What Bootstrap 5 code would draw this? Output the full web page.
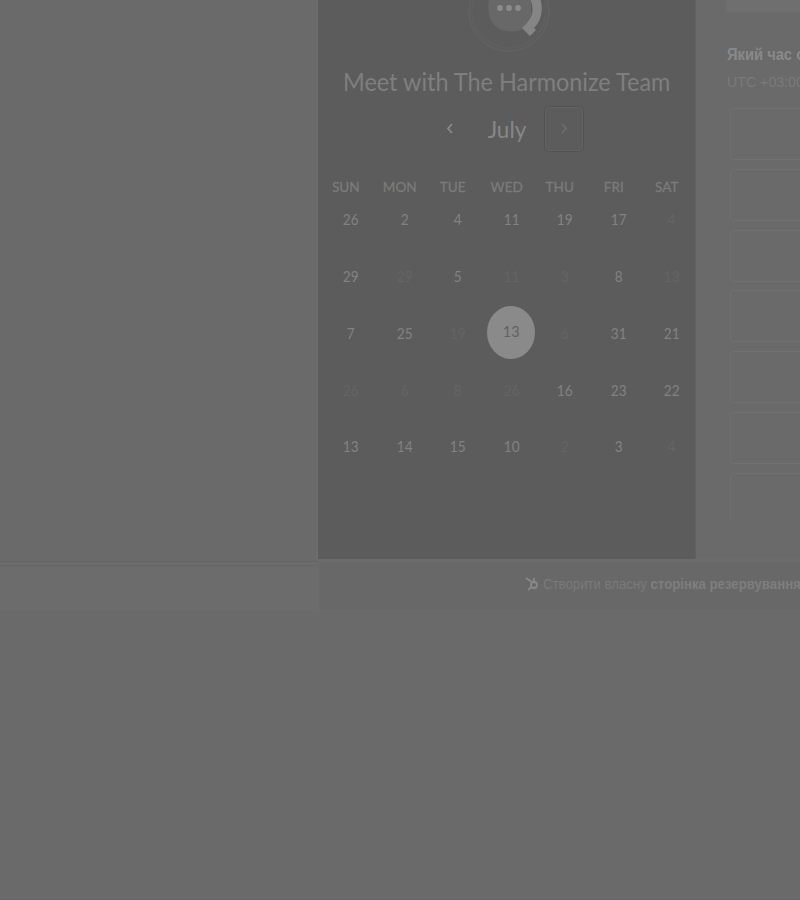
<!DOCTYPE html>
<html lang="uk">
<head>
<meta charset="utf-8">
<meta name="viewport" content="width=device-width, initial-scale=1">
<title>Meet with The Harmonize Team</title>
<link href="https://cdn.jsdelivr.net/npm/bootstrap@5.3.0/dist/css/bootstrap.min.css" rel="stylesheet">
<style>
body{background:#6a6a6a;color:#868686;font-family:"Liberation Sans",Arial,sans-serif;width:800px;height:900px;border-bottom:1px solid #686468}
.stage{height:559px}
.side{width:318px;border-right:2px solid #6d6d6d}
.cal{width:378px;background:#5c5c5c;border-right:1px solid #616161;font-family:Lato,sans-serif}
.logo{height:58px;padding-left:142px}
.logo svg{display:block}
.team{font-size:24.5px;line-height:30px;margin-top:9px;padding-left:25px;color:#7f7f7f;white-space:nowrap}
.team span{display:inline-block;transform:scaleX(.957);transform-origin:0 50%}
.monthbar{height:46px;margin-top:9px;padding-left:112px}
.month{width:74px;font-size:22.5px;line-height:48px;color:#878787}
.step{width:40px;height:46px;border:1px solid transparent;border-radius:4px}
.step.boxed{border-color:#535353;box-shadow:inset 0 0 0 1px #626262;color:#6c6c6c}
.week,.days{display:grid;grid-template-columns:repeat(7,53.5px);text-align:center}
.week{margin:25px 0 0 1px;font-size:14px;line-height:20px;color:#7b7b7b;-webkit-text-stroke:.3px #7b7b7b}
.week span{transform:scaleX(.97)}
.days{margin:-5px 0 0 6px;grid-auto-rows:56.7px;font-size:14.5px;color:#828282}
.days>span{transform:scaleX(.94)}
.days>.picked{transform:none;margin-top:-3px}
.faint{color:#646464}
.picked{width:48px;height:53px;border-radius:50%;background:#8a8a8a;color:#626262}
.times{width:104px;white-space:nowrap}
.dur{height:12px;margin-left:30px;background:#6f6f6f}
.ask{font-size:16px;line-height:20px;margin:33px 0 0 31px;color:#898989;transform:scaleX(.92);transform-origin:0 50%}
.zone{font-size:14.2px;line-height:18px;margin:8px 0 0 31px;color:#7a7a7a}
.slots{margin:17px 0 0 34px;height:412px;gap:8.8px}
.slot{height:52px;width:110px;border:1px solid #707070;border-radius:3px}
.foot{height:52px}
.foot-side{width:318px;background:linear-gradient(#6b6b6b 0 1px,#666 2px 3px,#6e6e6e 4px 5px,#666 6px,#6c6c6c 8px 100%)}
.foot-main{border-left:1px solid #6c6c6c;background:#686868;border-top:3px solid #6c6c6c;border-bottom:1px solid #6d6d6d;padding:0 0 4px 206px;white-space:nowrap;font-size:14px}
.own{color:#7a7a7a;transform:scaleX(.943);transform-origin:0 50%}
.own strong{color:#7e7e7e}
</style>
<script src="https://cdn.jsdelivr.net/npm/bootstrap@5.3.0/dist/js/bootstrap.bundle.min.js"></script>
</head>
<body class="overflow-hidden">
<main class="stage d-flex">
  <div class="side flex-shrink-0"></div>
  <section class="cal flex-shrink-0">
    <div class="logo">
      <svg width="96" height="58" viewBox="0 0 96 58" fill="none">
        <circle cx="49" cy="11" r="40" stroke="#656565"/>
        <circle cx="49" cy="11" r="37" stroke="#5f5f5f" stroke-width="2"/>
        <path d="M29-1C26 17 33 29 46 31c9 2 20-1 25-10V0Z" fill="#686868"/>
        <path d="M68-6C76 10 73 18 62 28l8 8 6-6-2-2C83 19 84 5 78-7Z" fill="#858585"/>
        <g fill="#8b8b8b"><circle cx="40" cy="8" r="2.9"/><circle cx="49" cy="8" r="2.9"/><circle cx="58" cy="8" r="2.9"/></g>
      </svg>
    </div>
    <div class="team"><span>Meet with The Harmonize Team</span></div>
    <div class="monthbar d-flex">
      <div class="step d-flex align-items-center justify-content-center flex-shrink-0"><svg width="8" height="12" fill="none" stroke="#8a8a8a" stroke-width="1.8"><path d="M6 1 2 5.500l4 4.500"/></svg></div>
      <div class="month text-center">July</div>
      <div class="step boxed d-flex align-items-center justify-content-center"><svg width="8" height="12" fill="none" stroke="currentColor" stroke-width="1.800"><path d="m2 1 4 4.500L2 10"/></svg></div>
    </div>
    <div class="week"><span>SUN</span><span>MON</span><span>TUE</span><span>WED</span><span>THU</span><span>FRI</span><span>SAT</span></div>
    <div class="days align-items-center">
      <span>26</span><span>2</span><span>4</span><span>11</span><span>19</span><span>17</span><span class="faint">4</span>
      <span>29</span><span class="faint">29</span><span>5</span><span class="faint">11</span><span class="faint">3</span><span>8</span><span class="faint">13</span>
      <span>7</span><span>25</span><span class="faint">19</span><span class="picked d-flex align-items-center justify-content-center mx-auto">13</span><span class="faint">6</span><span>31</span><span>21</span>
      <span class="faint">26</span><span class="faint">6</span><span class="faint">8</span><span class="faint">26</span><span>16</span><span>23</span><span>22</span>
      <span>13</span><span>14</span><span>15</span><span>10</span><span class="faint">2</span><span>3</span><span class="faint">4</span>
    </div>
  </section>
  <section class="times overflow-hidden flex-shrink-0">
    <div class="dur"></div>
    <div class="ask fw-bold">Який час обрати?</div>
    <div class="zone">UTC +03:00</div>
    <div class="slots d-flex flex-column overflow-hidden">
      <div class="slot flex-shrink-0"></div><div class="slot flex-shrink-0"></div><div class="slot flex-shrink-0"></div><div class="slot flex-shrink-0"></div><div class="slot flex-shrink-0"></div><div class="slot flex-shrink-0"></div><div class="slot flex-shrink-0"></div>
    </div>
  </section>
</main>
<footer class="foot d-flex">
  <div class="foot-side flex-shrink-0"></div>
  <div class="foot-main flex-grow-1 d-flex align-items-center overflow-hidden">
    <svg class="flex-shrink-0" width="14" height="16" fill="none" stroke="#888" stroke-width="1.800"><path d="m1 2 6 4M9 2v4M6.500 11 3 14"/><circle cx="9" cy="9" r="3"/></svg>
    <div class="own ms-1"><span>Створити власну</span> <strong>сторінка резервування</strong></div>
  </div>
</footer>
</body>
</html>
